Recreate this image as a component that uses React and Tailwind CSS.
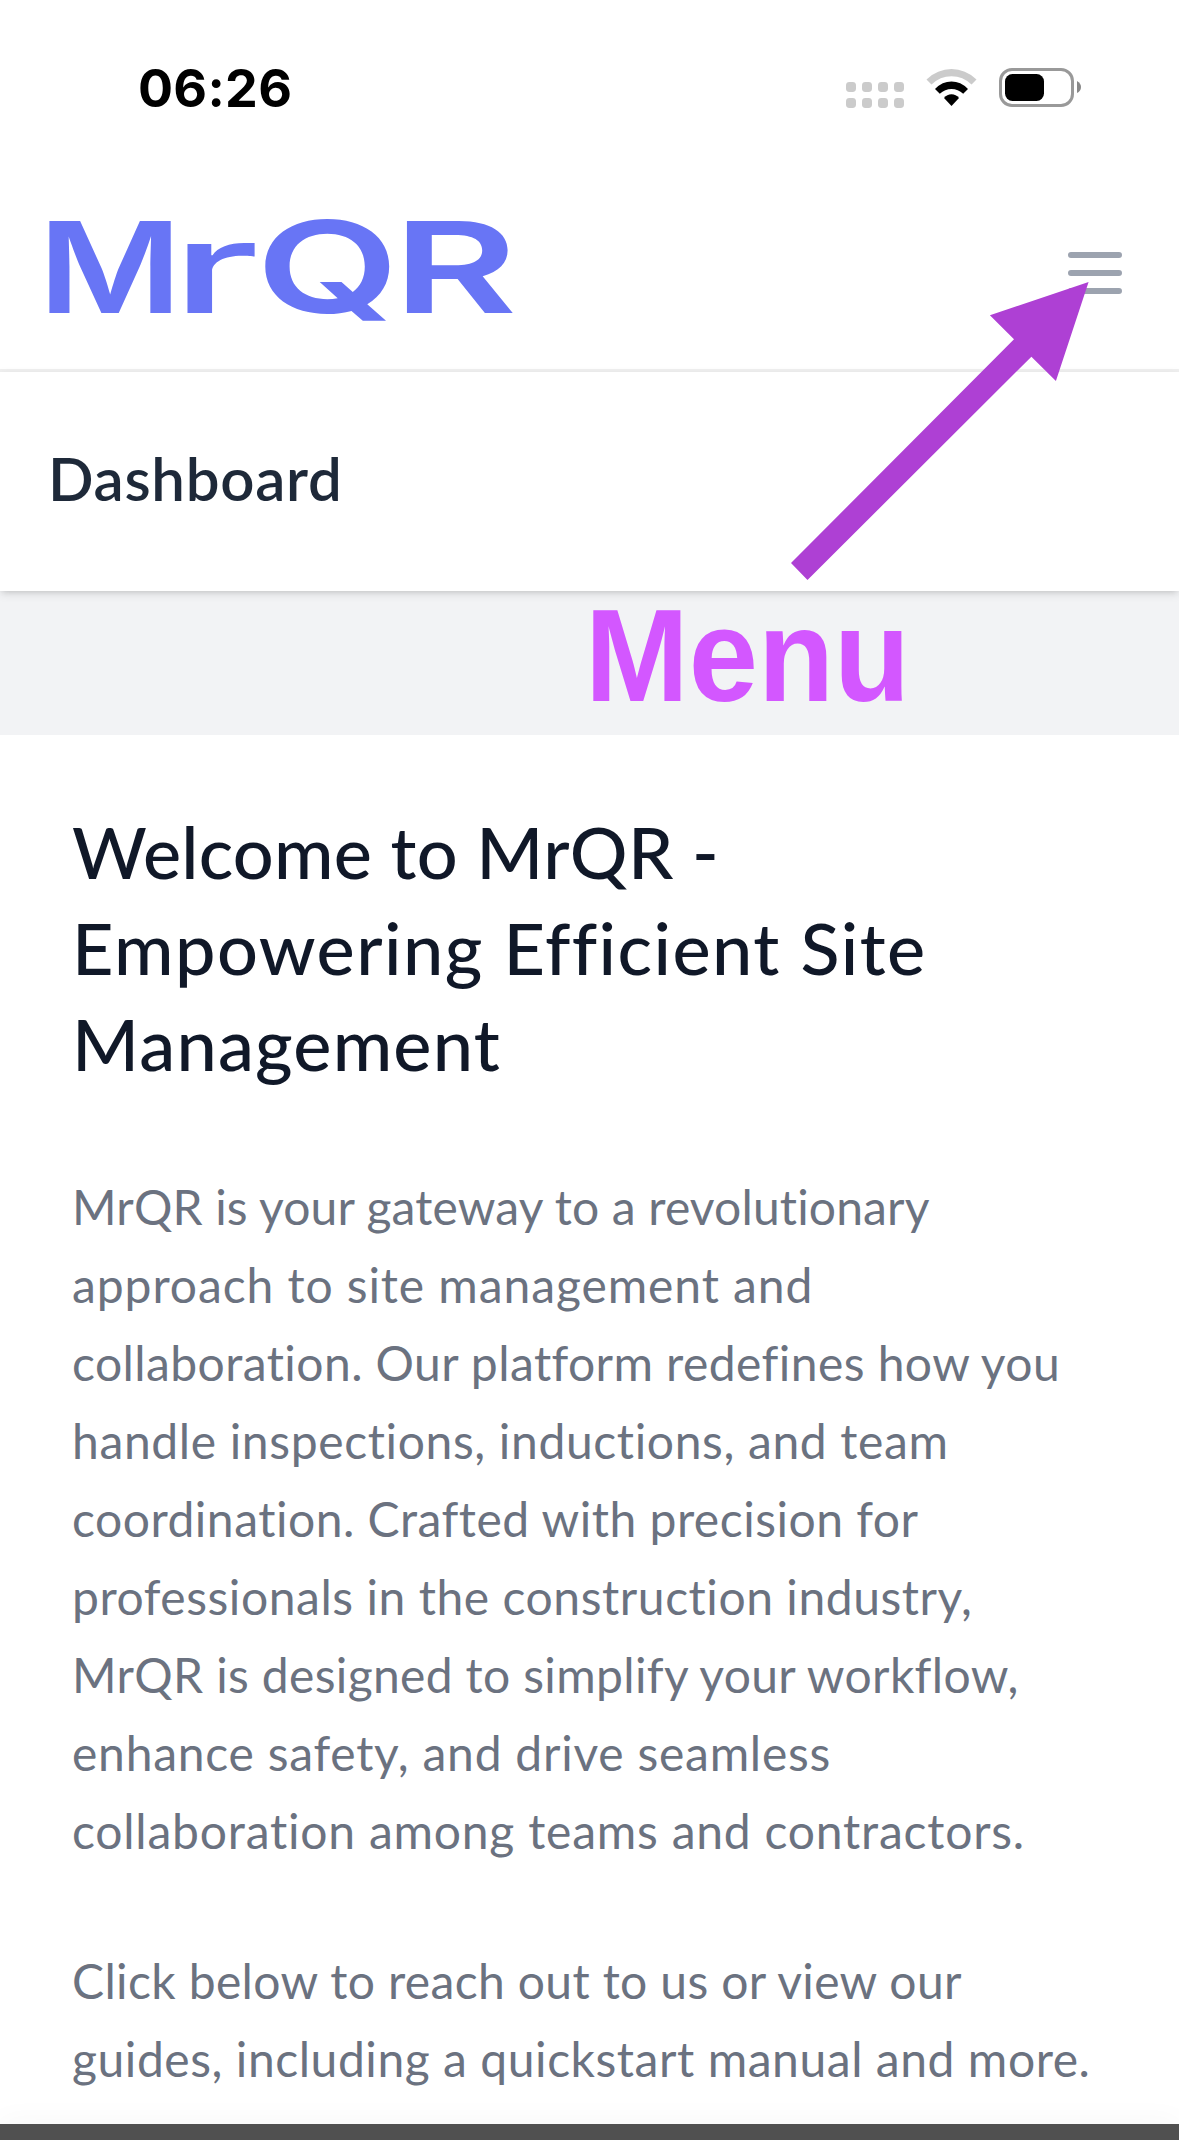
function Logo() {
  return (
    <div className="-mt-3 flex h-[92px] w-[470px] whitespace-nowrap font-['Inter',sans-serif] text-[127px] leading-[92px] font-semibold text-[#6875f5]">
      <span className="w-[137px] shrink-0"><span className="inline-block origin-left -translate-x-[11px] scale-x-[1.23]">M</span></span>
      <span className="w-[79px] shrink-0"><span className="inline-block origin-left -translate-x-[15px] scale-x-[1.8] font-medium">r</span></span>
      <span className="w-[141px] shrink-0"><span className="inline-block origin-left -translate-x-[9px] scale-x-[1.46]">Q</span></span>
      <span className="w-[107px] shrink-0"><span className="inline-block origin-left -translate-x-[13px] scale-x-[1.5]">R</span></span>
    </div>
  );
}

function StatusIcons() {
  return (
    <svg className="-mt-0.5 h-[44px] w-[240px] shrink-0" viewBox="846 66 240 44" fill="none">
      {[846, 862, 878, 894].map((x) => (
        <g key={x} fill="#cbcbcb">
          <rect x={x} y="82" width="10" height="10" rx="3.4" />
          <rect x={x} y="98" width="10" height="10" rx="3.4" />
        </g>
      ))}
      <path d="M926.5 79.5 Q937.5 69 951.5 69 Q965.500 69 976.500 79.5 L971.500 84.500 Q963 76.200 951.500 76.200 Q940 76.200 931.500 84.500 Z" fill="#cbcbcb" />
      <path d="M935 89 Q942.300 81.600 951.500 81.600 Q960.700 81.600 968 89 L963.200 93.800 Q958 89 951.500 89 Q945 89 939.800 93.800 Z" fill="#000" />
      <path d="M944 98 Q947 94.300 951.500 94.300 Q956 94.300 959 98 L951.500 106 Z" fill="#000" />
      <rect x="1000.500" y="69.500" width="72" height="36" rx="11.500" stroke="#999" strokeWidth="3" />
      <rect x="1005" y="74" width="39" height="27" rx="7.500" fill="#000" />
      <path d="M1077 81 Q1081 83.500 1081 87 Q1081 91 1077 93 Z" fill="#888" />
    </svg>
  );
}

const heading = [
  ["Welcome to MrQR -", "tracking-[0.25px]"],
  ["Empowering Efficient Site", "tracking-[1.45px]"],
  ["Management", "tracking-[1.2px]"],
];

const intro = [
  ["MrQR is your gateway to a revolutionary", "tracking-[0.14px]"],
  ["approach to site management and", "tracking-[0.91px]"],
  ["collaboration. Our platform redefines how you", "tracking-[0.42px]"],
  ["handle inspections, inductions, and team", "tracking-[0.63px]"],
  ["coordination. Crafted with precision for", "tracking-[0.5px]"],
  ["professionals in the construction industry,", "tracking-[0.55px]"],
  ["MrQR is designed to simplify your workflow,", "tracking-[0.34px]"],
  ["enhance safety, and drive seamless", "tracking-[0.75px]"],
  ["collaboration among teams and contractors.", "tracking-[0.78px]"],
];

const outro = [
  ["Click below to reach out to us or view our", "tracking-[0.36px]"],
  ["guides, including a quickstart manual and more.", "tracking-[0.55px]"],
];

function Lines({ rows }) {
  return rows.map(([text, tracking]) => (
    <span key={text} className={`block whitespace-nowrap ${tracking}`}>{text} </span>
  ));
}

export default function App() {
  return (
    <div className="relative flex h-[2140px] w-[1179px] flex-col overflow-hidden bg-[#f2f3f5] font-['Lato',sans-serif]">
      <div className="flex h-[177px] shrink-0 items-center justify-between bg-white pl-[138px] pr-[93px]">
        <span className="font-['Inter',sans-serif] text-[52px] leading-[60px] font-bold tracking-[0.3px] text-black">06:26</span>
        <StatusIcons />
      </div>

      <nav className="flex h-[195px] shrink-0 items-center justify-between border-b-[3px] border-[#f0f0f0] bg-white pl-[49px] pr-12">
        <Logo />
        <svg className="size-[72px]" viewBox="0 0 24 24" fill="none" stroke="#9ca3af" strokeWidth="2" strokeLinecap="round" strokeLinejoin="round">
          <path d="M4 6h16M4 12h16M4 18h16" />
        </svg>
      </nav>

      <header className="z-10 h-[219px] shrink-0 bg-white px-12 pt-16 shadow-[0_3px_9px_0_rgba(0,0,0,0.1),0_3px_6px_-3px_rgba(0,0,0,0.15)]">
        <h2 className="text-[60px] leading-[84px] font-semibold tracking-[0.7px] text-gray-800">Dashboard</h2>
      </header>

      <main className="mt-36 flex-1 bg-white px-18 pt-[68px]">
        <h1 className="text-[72px] leading-[96px] font-medium text-gray-900"><Lines rows={heading} /></h1>
        <p className="mt-[77px] text-[48px] leading-[78px] text-[#6b7280]"><Lines rows={intro} /></p>
        <p className="mt-[72px] text-[48px] leading-[78px] text-[#6b7280]"><Lines rows={outro} /></p>
      </main>

      <div className="h-4 shrink-0 bg-[#505050] shadow-[0_0_30px_rgba(0,0,0,0.05)]" />

      <svg className="absolute left-[791px] top-[282px] z-20 h-[298px] w-[298px]" viewBox="791 282 298 298">
        <path d="M1088.600 282 L989.900 315.300 L1014 339.300 L791 563 L807.500 580 L1031.400 356.700 L1055.900 381 Z" fill="#ae40d4" />
      </svg>
      <span className="absolute left-[585px] top-[590px] z-20 origin-left scale-x-[0.95] font-['Liberation_Sans',Arial,sans-serif] text-[131px] leading-[131px] font-bold text-[#d357ff]">Menu</span>
    </div>
  );
}
